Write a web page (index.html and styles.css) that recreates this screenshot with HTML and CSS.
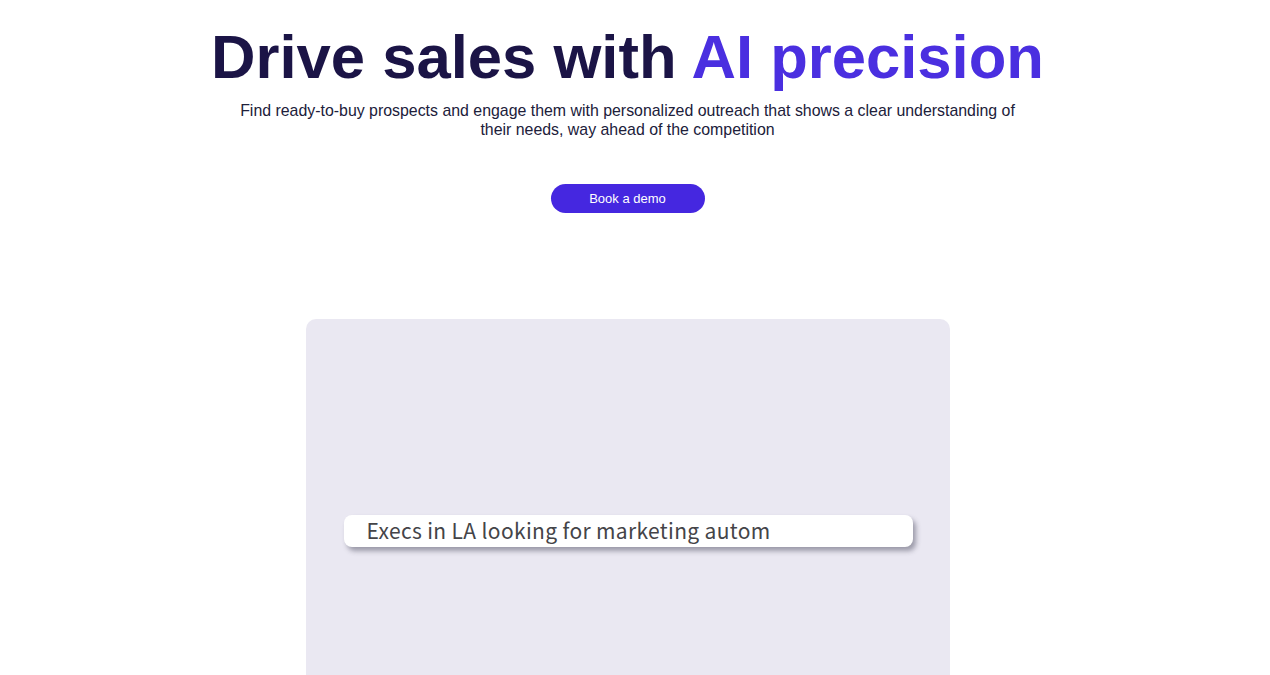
FILE: index.html
```html
<!DOCTYPE html>
<html>
<head>
<meta charset="utf-8">
<link rel="stylesheet" href="styles.css">
</head>
<body>
<main class="hero">
  <h1 class="title">Drive sales with <span class="accent">AI precision</span></h1>
  <p class="subtitle">Find ready-to-buy prospects and engage them with personalized outreach that shows a clear understanding of their needs, way ahead of the competition</p>
  <a class="cta" href="#">Book a demo</a>
  <div class="card">
    <div class="search">Execs in LA looking for marketing autom</div>
  </div>
</main>
</body>
</html>
```
FILE: styles.css
```css
html, body {
  margin: 0;
  padding: 0;
  background: #ffffff;
  overflow: hidden;
}
body {
  font-family: "Liberation Sans", Arial, sans-serif;
}
.hero {
  width: 1255px;
  display: flex;
  flex-direction: column;
  align-items: center;
  padding-top: 21px;
}
.title {
  margin: 0;
  font-size: 61.6px;
  line-height: 72px;
  font-weight: 700;
  color: #1b1446;
}
.accent {
  color: #4a2fe0;
}
.subtitle {
  margin: 8px 0 0;
  width: 800px;
  text-align: center;
  font-size: 15.9px;
  line-height: 19px;
  color: #20203a;
}
.cta {
  margin-top: 45px;
  width: 154px;
  height: 29px;
  border-radius: 15px;
  background: #4527e0;
  color: #ffffff;
  font-size: 13px;
  line-height: 29px;
  text-align: center;
  text-decoration: none;
}
.card {
  margin-top: 106px;
  width: 644px;
  height: 420px;
  border-radius: 10px;
  background: #eae8f2;
  display: flex;
  flex-direction: column;
  align-items: flex-start;
  padding-top: 196px;
  box-sizing: border-box;
  padding-left: 38px;
}
.search {
  width: 546px;
  height: 32px;
  background: #ffffff;
  border-radius: 8px;
  box-shadow: 3px 4px 5px rgba(60, 60, 80, 0.45);
  font-family: "Noto Sans CJK JP", "Noto Sans", sans-serif;
  font-size: 21px;
  letter-spacing: 0.35px;
  line-height: 31px;
  color: #444448;
  padding-left: 23px;
}
```
